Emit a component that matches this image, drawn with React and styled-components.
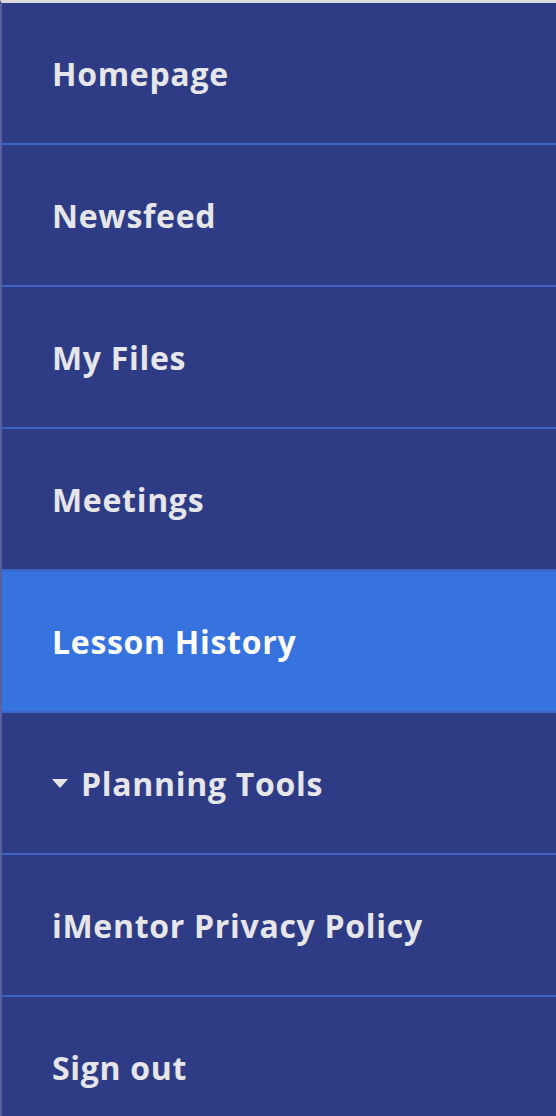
import React from "react";
import styled, { createGlobalStyle } from "styled-components";

const Global = createGlobalStyle`
	html, body {
		margin: 0;
		padding: 0;
		background: #2e3c85;
	}
`;

const items = [
	{ label: "Homepage" },
	{ label: "Newsfeed" },
	{ label: "My Files" },
	{ label: "Meetings" },
	{ label: "Lesson History", active: true },
	{ label: "Planning Tools", caret: true },
	{ label: "iMentor Privacy Policy" },
	{ label: "Sign out" },
];

function Menu() {
	return (
		<>
			<Global />
			<Nav>
				{items.map((item) => (
					<Item key={item.label} $active={item.active}>
						{item.caret && <Caret />}
						{item.label}
					</Item>
				))}
			</Nav>
		</>
	);
}

const Nav = styled.nav`
	display: flex;
	flex-direction: column;
	width: 556px;
	height: 1116px;
	overflow: hidden;
	border-top: 3px solid #dadada;
	border-left: 2px solid #5861a0;
	box-sizing: border-box;
	background: #2e3c85;
`;

const Item = styled.a`
	display: flex;
	align-items: center;
	flex: 0 0 142px;
	box-sizing: border-box;
	padding-left: 50px;
	border-bottom: 2px solid #3d63c6;
	background: ${(p) => (p.$active ? "#3673df" : "transparent")};
	color: ${(p) => (p.$active ? "#ffffff" : "#e6e6ea")};
	font-family: "Open Sans", sans-serif;
	font-weight: 700;
	font-size: 32px;
	letter-spacing: 0.7px;
	cursor: pointer;
`;

const Caret = styled.span`
	width: 0;
	height: 0;
	margin-right: 13px;
	border-left: 8px solid transparent;
	border-right: 8px solid transparent;
	border-top: 9px solid #e6e6ea;
`;

export default Menu;
